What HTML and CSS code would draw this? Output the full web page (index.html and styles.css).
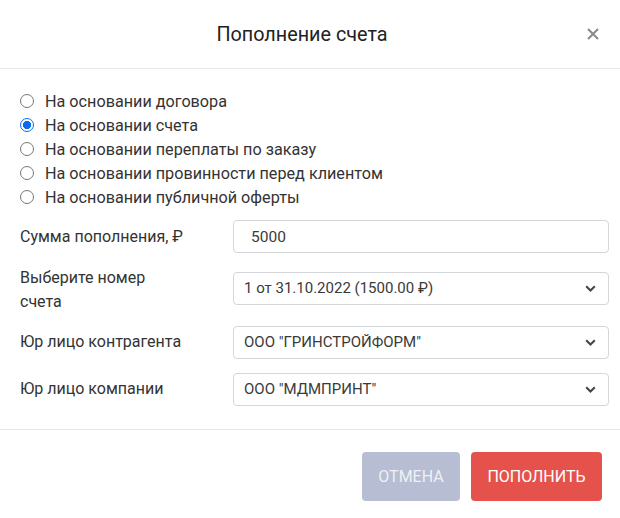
FILE: index.html
```html
<!DOCTYPE html>
<html lang="ru">
<head>
<meta charset="utf-8">
<link rel="stylesheet" href="styles.css">
</head>
<body>
<div class="dialog">
  <div class="header">
    <div class="title">Пополнение счета</div>
    <button class="close" type="button" aria-label="Закрыть">
      <svg width="14" height="14" viewBox="0 0 14 14"><path d="M2 2 L12 12 M12 2 L2 12" stroke="#8a8a8a" stroke-width="2" fill="none"/></svg>
    </button>
  </div>
  <div class="body">
    <div class="radios">
      <label class="radio"><span class="dot"></span>На основании договора</label>
      <label class="radio checked"><span class="dot"></span>На основании счета</label>
      <label class="radio"><span class="dot"></span>На основании переплаты по заказу</label>
      <label class="radio"><span class="dot"></span>На основании провинности перед клиентом</label>
      <label class="radio"><span class="dot"></span>На основании публичной оферты</label>
    </div>
    <div class="row r1">
      <div class="label">Сумма пополнения, ₽</div>
      <div class="field input">5000</div>
    </div>
    <div class="row r2">
      <div class="label">Выберите номер<br>счета</div>
      <div class="field select">1 от 31.10.2022 (1500.00 ₽)<svg class="chev" width="11" height="7" viewBox="0 0 11 7"><path d="M1.2 1.2 L5.5 5.5 L9.8 1.2" stroke="#444" stroke-width="2" fill="none"/></svg></div>
    </div>
    <div class="row r3">
      <div class="label">Юр лицо контрагента</div>
      <div class="field select">ООО "ГРИНСТРОЙФОРМ"<svg class="chev" width="11" height="7" viewBox="0 0 11 7"><path d="M1.2 1.2 L5.5 5.5 L9.8 1.2" stroke="#444" stroke-width="2" fill="none"/></svg></div>
    </div>
    <div class="row r4">
      <div class="label">Юр лицо компании</div>
      <div class="field select">ООО "МДМПРИНТ"<svg class="chev" width="11" height="7" viewBox="0 0 11 7"><path d="M1.2 1.2 L5.5 5.5 L9.8 1.2" stroke="#444" stroke-width="2" fill="none"/></svg></div>
    </div>
  </div>
  <div class="footer">
    <button class="btn cancel" type="button">ОТМЕНА</button>
    <button class="btn submit" type="button">ПОПОЛНИТЬ</button>
  </div>
</div>
</body>
</html>
```
FILE: styles.css
```css
html, body {
  margin: 0;
  padding: 0;
  background: #fff;
}
body {
  font-family: Roboto, "Liberation Sans", Arial, sans-serif;
  color: #333;
}
.dialog {
  width: 620px;
  height: 518px;
  background: #fff;
}
.header {
  border-bottom: 1px solid #e5e8ec;
  display: flex;
  align-items: center;
  padding: 0 14px 0 20px;
  box-sizing: border-box;
  height: 69px;
}
.title {
  flex: 1;
  text-align: center;
  font-size: 19.8px;
  color: #222;
  padding-top: 1px;
}
.close {
  width: 18px;
  height: 18px;
  padding: 0;
  border: 0;
  background: none;
  display: flex;
  align-items: center;
  justify-content: center;
  margin-right: 4px;
}
.body {
  padding: 20px 11px 0 20px;
  height: 361px;
  box-sizing: border-box;
  border-bottom: 1px solid #e5e8ec;
}
.radios {
  display: flex;
  flex-direction: column;
  margin-bottom: 11px;
}
.radio {
  display: flex;
  align-items: center;
  height: 24px;
  font-size: 16.2px;
  color: #333;
}
.dot {
  width: 12px;
  height: 12px;
  border: 1px solid #767676;
  border-radius: 50%;
  margin-right: 11px;
  box-sizing: content-box;
  flex: none;
}
.radio.checked .dot {
  border: 1px solid #0b6bf1;
  background: radial-gradient(circle, #0b6bf1 0 3.8px, #fff 4.4px);
}
.row {
  display: flex;
  align-items: center;
}
.label {
  width: 213px;
  flex: none;
  font-size: 16px;
  line-height: 24px;
  color: #333;
}
.field {
  flex: 1;
  height: 33px;
  box-sizing: border-box;
  border: 1px solid #d3d6da;
  border-radius: 4px;
  display: flex;
  align-items: center;
  font-size: 15px;
  color: #3a3a3a;
}
.input {
  padding-left: 17px;
  font-size: 15.5px;
}
.select {
  padding: 0 12px 0 10px;
}
.chev {
  margin-left: auto;
}
.r1 { margin-bottom: 13px; }
.r2 { margin-bottom: 5px; }
.r2 .field { margin-top: -4px; }
.r3 { height: 46px; margin-bottom: 2px; }
.r4 { height: 46px; margin-top: -1px; }
.footer {
  display: flex;
  justify-content: flex-end;
  gap: 11px;
  padding: 22px 18px 0 0;
}
.btn {
  height: 49px;
  border: 0;
  border-radius: 4px;
  font-family: Roboto, "Liberation Sans", Arial, sans-serif;
  font-size: 16px;
  color: #fff;
  padding: 0;
}
.cancel {
  width: 98px;
  background: #b7bdd2;
  color: #eef0f6;
}
.submit {
  width: 131px;
  background: #e5524c;
}
```
